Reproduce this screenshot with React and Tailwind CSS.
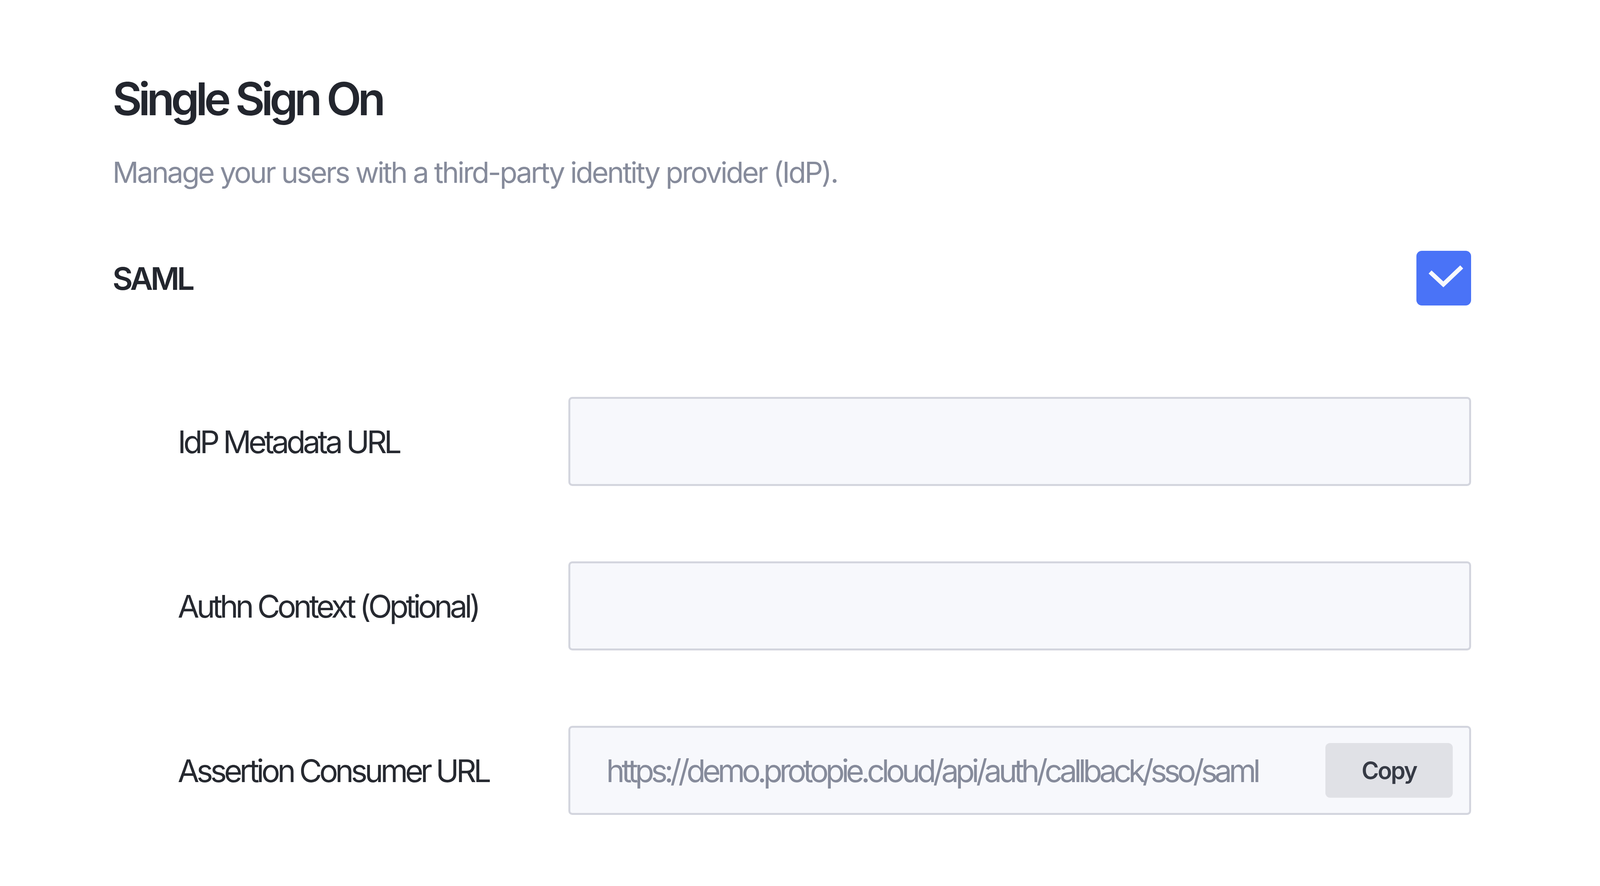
import React from 'react';

const fields = [
  { label: 'IdP Metadata URL', value: '' },
  { label: 'Authn Context (Optional)', value: '' },
  { label: 'Assertion Consumer URL', value: 'https://demo.protopie.cloud/api/auth/callback/sso/saml', copy: true },
];

const CheckIcon = () => (
  <svg viewBox="0 0 140 140" className="w-[140px] h-[140px]">
    <polyline
      points="39,58 69,86 112,45"
      fill="none"
      stroke="#f7f8fc"
      strokeWidth="11"
      strokeLinecap="square"
    />
  </svg>
);

const App = () => {
  return (
    <div className="min-h-screen bg-white font-['Inter',sans-serif] pl-[288px] pr-[330px] pt-[183px]">
      <h1 className="text-[116px] leading-[140px] font-semibold text-[#23262e] tracking-[-9px]">
        Single Sign On
      </h1>
      <p className="mt-[73px] text-[74px] leading-[90px] text-[#868b9b] tracking-[-4px]">
        Manage your users with a third-party identity provider (IdP).
      </p>

      {/* SAML toggle */}
      <div className="mt-[156px] flex items-center justify-between h-[140px]">
        <h2 className="text-[80px] leading-[97px] font-semibold text-[#23262e] tracking-[-6px]">SAML</h2>
        <div className="w-[140px] h-[140px] rounded-[14px] bg-[#4a73f7]">
          <CheckIcon />
        </div>
      </div>

      {/* Fields */}
      <div className="mt-[234px] flex flex-col gap-[193px]">
        {fields.map((field) => (
          <div key={field.label} className="flex items-center">
            <label className="w-[1167px] shrink-0 pl-[167px] text-[80px] leading-[97px] text-[#262930] tracking-[-7px] whitespace-nowrap">
              {field.label}
            </label>
            <div className="flex-1 min-w-0 h-[228px] flex items-center border-[5px] border-[#d3d5de] bg-[#f7f8fc] rounded-[10px] pl-[92px] pr-[42px]">
              <span className="flex-1 min-w-0 overflow-hidden text-[80px] leading-[97px] text-[#868b9b] tracking-[-8px] whitespace-nowrap">
                {field.value}
              </span>
              {field.copy && (
                <button className="shrink-0 w-[326px] h-[140px] rounded-[12px] bg-[#e0e1e6] text-[60px] font-semibold text-[#363a45] tracking-[-3px]">
                  Copy
                </button>
              )}
            </div>
          </div>
        ))}
      </div>
    </div>
  );
};

export default App;
